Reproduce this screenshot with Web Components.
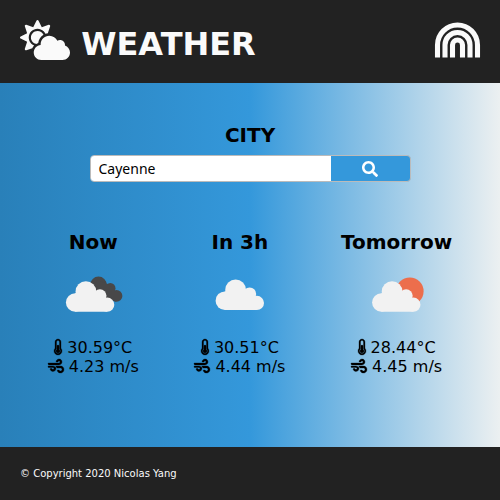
<!DOCTYPE html>
<html lang="en"><head><meta charset="utf-8"><title>Weather</title>
<style>
html,body{margin:0;height:100%}
body{font-family:"DejaVu Sans",sans-serif;font-size:16px;color:#000;background:#222;overflow:hidden}
</style></head><body>
<weather-app></weather-app>
<script>
const define = (name, html, render) => {
  const t = document.createElement('template');
  t.innerHTML = html;
  customElements.define(name, class extends HTMLElement {
    constructor() {
      super();
      this.attachShadow({mode: 'open'}).appendChild(t.content.cloneNode(true));
    }
    connectedCallback() { if (render) render(this, this.shadowRoot); }
  });
};

const glyphs = {
  'cloud-sun': ['0 0 640 512', '<path d="M575.2 325.7c.2-1.9.8-3.7.8-5.6 0-35.3-28.7-64-64-64-12.6 0-24.2 3.8-34.1 10-17.6-38.8-56.5-66-101.9-66-61.8 0-112 50.1-112 112 0 3 .7 5.8.9 8.7-49.6 3.7-88.9 44.7-88.9 95.3 0 53 43 96 96 96h272c53 0 96-43 96-96 0-42.1-27.2-77.4-64.8-90.4zm-430.4-22.6c-43.7-43.7-43.7-114.7 0-158.3 43.7-43.7 114.7-43.7 158.4 0 9.7 9.7 16.9 20.9 22.3 32.7 9.8-3.7 20.1-6 30.7-7.5L386 81.1c4-11.9-7.3-23.1-19.2-19.2L279 91.2 237.5 8.4C232-2.8 216-2.8 210.4 8.4L169 91.2 81.1 61.9C69.3 58 58 69.3 61.9 81.1l29.3 87.8-82.8 41.5c-11.2 5.6-11.2 21.5 0 27.1l82.8 41.4-29.3 87.8c-4 11.9 7.3 23.1 19.2 19.2l76.1-25.3c6.1-12.4 14-23.7 23.6-33.5-13.1-5.4-25.4-13.4-36-24zm-4.8-79.2c0 40.8 29.3 74.8 67.9 82.3 8-4.7 16.3-8.8 25.2-11.7 5.4-44.3 31-82.5 67.4-105C287.3 160.4 258 140 224 140c-46.3 0-84 37.6-84 83.9z"/>'],
  rainbow: ['0 0 576 512', '<g fill="none" stroke="currentColor" stroke-width="65"><path d="M32 480V320a256 256 0 0 1 512 0V480M128 480V320a160 160 0 0 1 320 0V480M224 480V320a64 64 0 0 1 128 0V480"/></g>'],
  search: ['0 0 512 512', '<path d="M505 442.7L405.3 343c-4.5-4.5-10.6-7-17-7H372c27.6-35.3 44-79.7 44-128C416 93.1 322.9 0 208 0S0 93.1 0 208s93.1 208 208 208c48.3 0 92.7-16.4 128-44v16.3c0 6.4 2.5 12.5 7 17l99.7 99.7c9.4 9.4 24.6 9.4 33.9 0l28.3-28.3c9.4-9.4 9.4-24.6.1-34zM208 336c-70.7 0-128-57.2-128-128 0-70.7 57.2-128 128-128 70.7 0 128 57.2 128 128 0 70.7-57.2 128-128 128z"/>'],
  thermometer: ['0 0 256 512', '<path d="M192 384c0 35.346-28.654 64-64 64s-64-28.654-64-64c0-23.685 12.876-44.349 32-55.417V224c0-17.673 14.327-32 32-32s32 14.327 32 32v104.583c19.124 11.068 32 31.732 32 55.417zm32-84.653c19.912 22.563 32 52.194 32 84.653 0 70.696-57.303 128-128 128-.299 0-.609-.001-.909-.003C56.789 511.509-.357 453.636.002 383.333.166 351.135 12.225 321.755 32 299.346V96C32 42.98 74.98 0 128 0s96 42.98 96 96v203.347zM208 384c0-34.339-19.37-52.19-32-66.502V96c0-26.467-21.533-48-48-48S80 69.533 80 96v221.498c-12.732 14.428-31.825 32.1-31.999 66.08-.224 43.876 35.563 80.116 79.423 80.42L128 464c44.112 0 80-35.888 80-80z"/>'],
  wind: ['0 0 512 512', '<path d="M156.7 256H16c-8.8 0-16 7.2-16 16v16c0 8.8 7.2 16 16 16h142.2c15.9 0 30.8 10.9 33.4 26.6 3.3 20-12.1 37.4-31.6 37.4-14.1 0-26.1-9.2-30.4-21.9-2.1-6.3-8.6-10.1-15.2-10.1H81.6c-9.8 0-17.7 8.8-15.9 18.4 8.6 44.1 47.6 77.6 94.2 77.6 57.1 0 102.7-50.1 95.2-108.6C249 291 205.4 256 156.7 256zM16 224h336c59.7 0 106.8-54.8 93.8-116.7-7.6-36.2-36.9-65.5-73.1-73.1-55.4-11.6-105.1 24.9-114.9 75.5-1.9 9.6 6.1 18.3 15.8 18.3h32.8c6.7 0 13.1-3.8 15.2-10.1C325.9 105.2 337.9 96 352 96c19.4 0 34.9 17.4 31.6 37.4-2.6 15.7-17.4 26.6-33.4 26.6H16c-8.8 0-16 7.2-16 16v16c0 8.8 7.2 16 16 16zm384 32H243.7c19.3 16.6 33.2 38.8 39.8 64H400c26.5 0 48 21.5 48 48s-21.5 48-48 48c-17.9 0-33.3-9.9-41.6-24.4-2.9-5-8.7-7.6-14.5-7.6h-33.8c-10.9 0-19 10.8-15.3 21.1 17.8 50.6 70.5 84.8 129.4 72.3 41.2-8.7 75.1-41.6 84.7-82.7C526 321.5 470.5 256 400 256z"/>']
};
define('ui-icon', `<style>:host{display:inline-block;height:1em;vertical-align:-.125em}svg{display:block;height:1em;fill:currentColor;overflow:visible}</style><span></span>`,
  (el, root) => {
    const [box, body] = glyphs[el.getAttribute('name')];
    const [, , w, h] = box.split(' ');
    const bold = el.hasAttribute('bold') ? 'stroke="currentColor" stroke-width="10"' : '';
    root.querySelector('span').innerHTML = `<svg viewBox="${box}" ${bold} style="width:${w / h}em">${body}</svg>`;
  });

const cloud = '<g fill="#f2f2f2"><circle cx="32.2" cy="27.5" r="9.3"/><circle cx="42.9" cy="16.7" r="10.4"/><circle cx="56.9" cy="20.8" r="6.6"/><circle cx="64.2" cy="29.7" r="7.1"/><path d="M32 18.5L43 12L57 19L62 23L64.2 36.8H32.2z"/></g>';
const skies = {
  broken: '<g fill="#484849"><circle cx="55.5" cy="9.7" r="8.2"/><circle cx="67.3" cy="13.2" r="5.2"/><circle cx="73.5" cy="20.9" r="5.9"/><path d="M55 5L67 10L73 17V26.8L60 22L48 15z"/></g>' + cloud,
  scattered: `<g transform="translate(2.7 -1.8)">${cloud}</g>`,
  sunny: `<circle cx="62.8" cy="16.3" r="13.8" fill="#ec6e4c"/><g transform="translate(2.2 0)">${cloud}</g>`
};
define('sky-picture', `<style>:host{display:block;width:100px;height:50px}svg{display:block}</style><div></div>`,
  (el, root) => {
    root.querySelector('div').innerHTML = `<svg width="100" height="50" viewBox="0 0 100 50">${skies[el.getAttribute('sky')]}</svg>`;
  });

define('app-header', `<style>
:host{display:flex;align-items:center;justify-content:space-between;height:83px;padding:0 20px;box-sizing:border-box;background:#222;color:#fafafa}
.brand{display:flex;align-items:center;gap:11.2px}
.brand ui-icon,.mark{font-size:40px}
.mark{padding-bottom:3px}.brand ui-icon{padding-bottom:3px}
h1{margin:0;padding-top:4px;font-size:32px;line-height:38px}
</style><div class="brand"><ui-icon name="cloud-sun"></ui-icon><h1><slot></slot></h1></div><ui-icon class="mark" name="rainbow"></ui-icon>`);

define('city-search', `<style>
:host{display:flex;flex-direction:column;align-items:center}
h2{margin:0 0 8px;font-size:20px;line-height:24px}
.field{display:flex;width:321px;height:27px;margin-left:1px;box-sizing:border-box;border:1px solid #bbb;border-radius:4px;overflow:hidden;background:#3498db}
.value{width:240px;box-sizing:border-box;padding-left:7.5px;background:#fff;font:14px/25px "Noto Sans",sans-serif}
.go{flex:1;display:flex;align-items:center;justify-content:center;padding-right:1px;color:#fff;font-size:16px}
</style><h2><slot></slot></h2><div class="field"><div class="value">Cayenne</div><div class="go"><ui-icon name="search"></ui-icon></div></div>`);

define('forecast-card', `<style>
:host{display:flex;flex-direction:column;align-items:center}
h2{margin:0;font-size:20px;line-height:24px}
.sky{height:50px;margin:21px -10px 13px}
p{margin:0;line-height:19px;white-space:nowrap}
</style><h2><slot></slot></h2><div class="sky"></div><p><ui-icon bold name="thermometer"></ui-icon> <span id="t"></span></p><p><ui-icon bold name="wind"></ui-icon> <span id="w"></span></p>`,
  (el, root) => {
    root.querySelector('.sky').innerHTML = `<sky-picture sky="${el.getAttribute('sky')}"></sky-picture>`;
    root.getElementById('t').textContent = el.getAttribute('temp');
    root.getElementById('w').textContent = el.getAttribute('wind');
  });

define('app-footer', `<style>:host{display:flex;align-items:center;height:53px;padding:0 20px;box-sizing:border-box;background:#222;color:#fafafa;font-size:10px}</style><slot></slot>`);

define('weather-app', `<style>
:host{display:grid;grid-template-rows:83px 364px 53px;height:500px}
main{background:linear-gradient(to right,#2980b9,#3498db 50%,#ecf0f1);padding-top:40px}
.days{display:flex;justify-content:space-between;padding:0 47.8px 0 47.7px;margin-top:48px}
</style>
<app-header>WEATHER</app-header>
<main><city-search>CITY</city-search>
<div class="days">
<forecast-card sky="broken" temp="30.59°C" wind="4.23 m/s">Now</forecast-card>
<forecast-card sky="scattered" temp="30.51°C" wind="4.44 m/s">In 3h</forecast-card>
<forecast-card sky="sunny" temp="28.44°C" wind="4.45 m/s">Tomorrow</forecast-card>
</div></main>
<app-footer>© Copyright 2020 Nicolas Yang</app-footer>`);
</script></body></html>
